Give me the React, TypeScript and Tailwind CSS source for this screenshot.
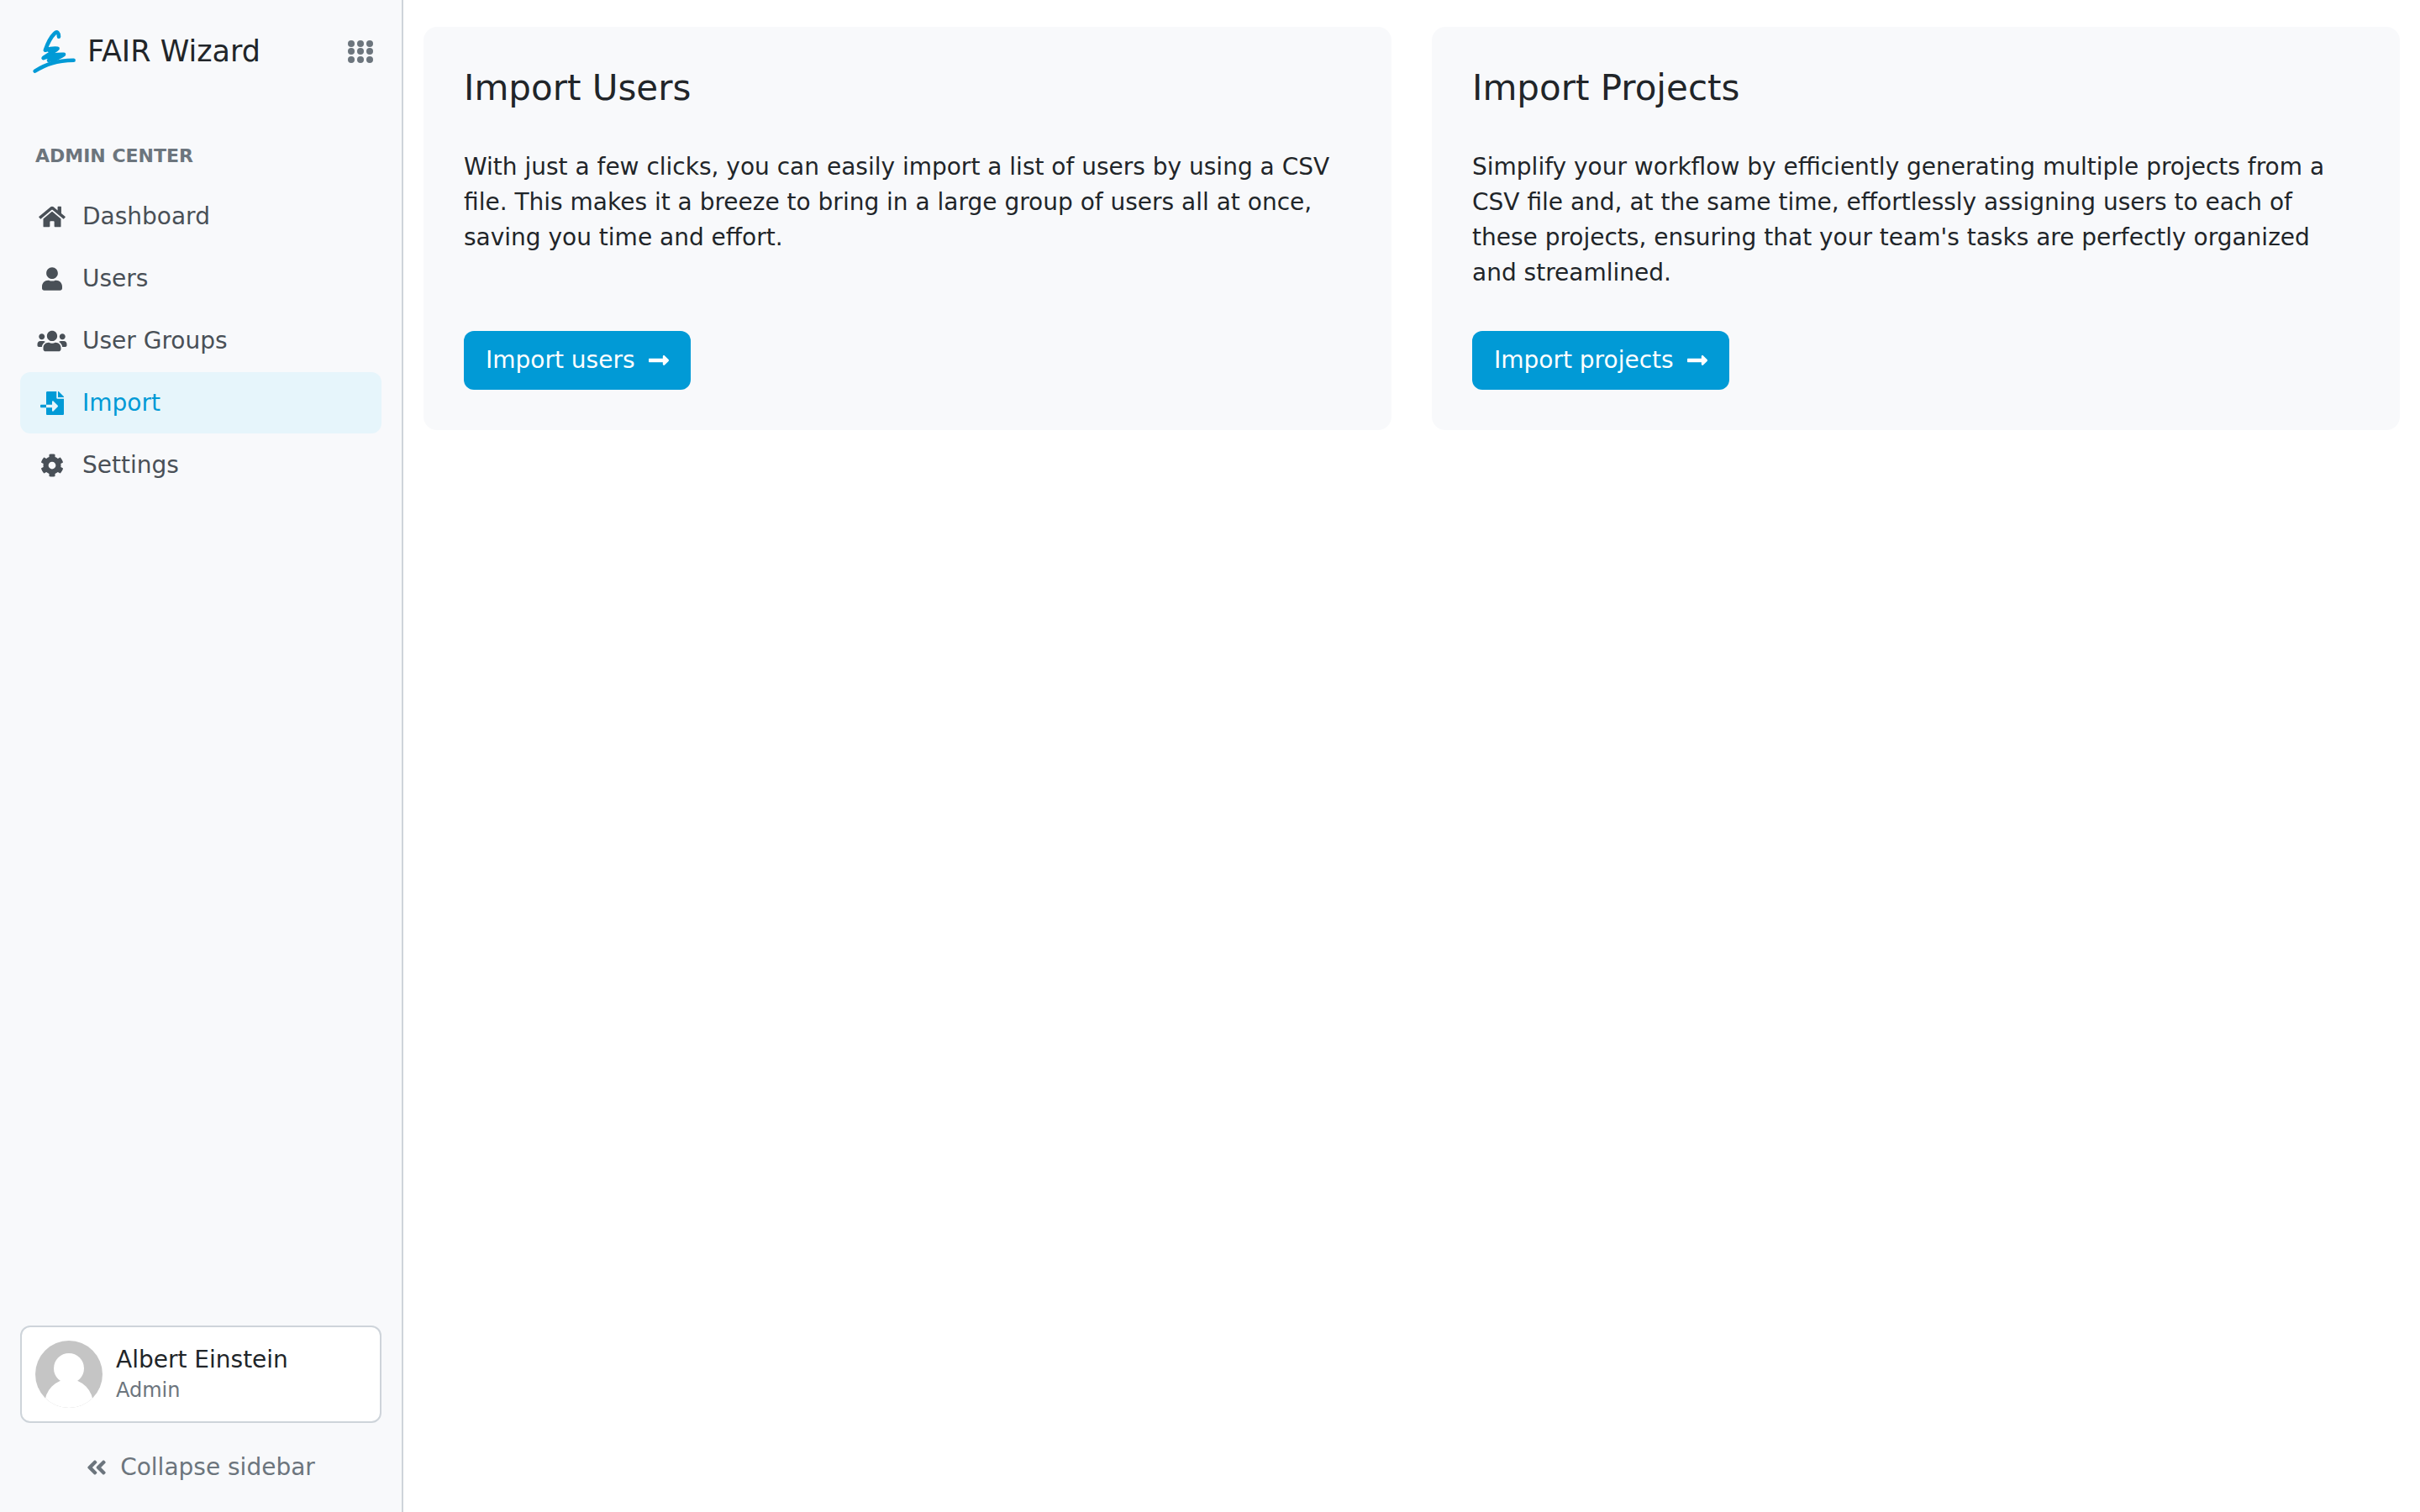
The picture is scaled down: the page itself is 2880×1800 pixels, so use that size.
import type { ReactNode } from "react";
import {
  FaAngleDoubleLeft,
  FaCog,
  FaFileImport,
  FaHome,
  FaLongArrowAltRight,
  FaUser,
  FaUsers,
} from "react-icons/fa";

function Logo() {
  return (
    <svg
      viewBox="0 0 52 52"
      className="h-[52px] w-[52px] overflow-visible text-[#019ad6]"
      fill="none"
      stroke="currentColor"
      strokeLinecap="round"
      strokeLinejoin="round"
      aria-hidden="true"
    >
      <path
        strokeWidth="4.6"
        d="M31 8.6C30.8 4.4 29.2 1.6 25.8 5C21.6 9 17.4 17.4 14.8 24.8C19 23.4 25 22.2 29.6 22.8C27 26.6 17 29.8 12.6 34.2C19 31.4 30 29.6 37 29.8C33 32.8 28 34.4 23 37.6"
      />
      <path strokeWidth="4.6" d="M20 25.4L27.6 23.8M19 33.4L30 30.6M19 36.8L30 33" />
      <path strokeWidth="4.6" d="M2.6 49.6C16 41.4 28 37.2 48.6 36.8" />
    </svg>
  );
}

function AppsIcon() {
  return (
    <svg viewBox="0 0 30 27" className="h-[27px] w-[30px]" fill="currentColor" aria-hidden="true">
      {[4, 13, 23].map((cy) =>
        [4, 15, 26].map((cx) => <circle key={`${cx}-${cy}`} cx={cx} cy={cy} r="4" />),
      )}
    </svg>
  );
}

function Avatar() {
  return (
    <svg viewBox="0 0 80 80" className="h-20 w-20 shrink-0 rounded-full bg-[#c5c5c5]" aria-hidden="true">
      <circle cx="40" cy="33" r="18" fill="#fff" />
      <ellipse cx="40" cy="76" rx="29" ry="30" fill="#fff" />
    </svg>
  );
}

const navItems: { label: string; icon: ReactNode; active?: boolean }[] = [
  { label: "Dashboard", icon: <FaHome className="h-7 w-8" /> },
  { label: "Users", icon: <FaUser className="h-7 w-6" /> },
  { label: "User Groups", icon: <FaUsers className="h-7 w-9" /> },
  { label: "Import", icon: <FaFileImport className="h-7 w-7" />, active: true },
  { label: "Settings", icon: <FaCog className="h-7 w-7" /> },
];

function Sidebar() {
  return (
    <aside className="flex w-[480px] shrink-0 flex-col border-r-2 border-[#ced4da] bg-[#f8f9fb] px-6">
      <header className="flex items-center justify-between pt-[35px] pr-[10px] pl-[15px]">
        <a href="#home" className="flex items-center gap-[13px] text-[35px] leading-[52px]">
          <Logo />
          FAIR Wizard
        </a>
        <button type="button" aria-label="Applications" className="text-[#6c757d]">
          <AppsIcon />
        </button>
      </header>
      <h2 className="mt-[82px] pl-[18px] text-[22px] leading-[34px] font-bold text-[#6c757d]">
        ADMIN CENTER
      </h2>
      <nav className="mt-[18px] flex flex-col gap-px">
        {navItems.map(({ label, icon, active }) => (
          <a
            key={label}
            href={`#${label}`}
            aria-current={active ? "page" : undefined}
            className={
              active
                ? "flex h-[73px] items-center gap-[18px] rounded-xl bg-[#e6f5fb] px-5 text-[#019ad6]"
                : "flex h-[73px] items-center gap-[18px] rounded-xl px-5 text-[#495057]"
            }
          >
            <span className="flex w-9 justify-center">{icon}</span>
            {label}
          </a>
        ))}
      </nav>
      <div className="mt-auto flex flex-col pb-8">
        <button
          type="button"
          className="flex items-center gap-4 rounded-xl border-2 border-[#ced4da] bg-white p-4 text-left"
        >
          <Avatar />
          <span className="flex flex-col">
            <span className="leading-[38px]">Albert Einstein</span>
            <span className="text-[24px] leading-[34px] text-[#6c757d]">Admin</span>
          </span>
        </button>
        <button
          type="button"
          className="mt-8 flex items-center justify-center gap-4 text-[#6c757d]"
        >
          <FaAngleDoubleLeft className="h-7 w-6" />
          Collapse sidebar
        </button>
      </div>
    </aside>
  );
}

function ImportCard({ title, text, action }: { title: string; text: string; action: string }) {
  return (
    <section className="flex flex-1 flex-col items-start rounded-2xl bg-[#f8f9fb] p-12">
      <h1 className="text-[42px] leading-[50px]">{title}</h1>
      <p className="mt-12 mb-12">{text}</p>
      <button
        type="button"
        className="mt-auto flex items-center gap-4 rounded-xl bg-[#019ad6] px-[26px] py-[14px] text-white"
      >
        {action}
        <FaLongArrowAltRight className="h-7 w-6" />
      </button>
    </section>
  );
}

export default function App() {
  return (
    <div className="flex min-h-screen bg-white font-['DejaVu_Sans',sans-serif] text-[28px] leading-[42px] text-[#212529]">
      <Sidebar />
      <main className="flex flex-1 items-start px-6 py-8">
        <div className="flex flex-1 gap-12">
          <ImportCard
            title="Import Users"
            text="With just a few clicks, you can easily import a list of users by using a CSV file. This makes it a breeze to bring in a large group of users all at once, saving you time and effort."
            action="Import users"
          />
          <ImportCard
            title="Import Projects"
            text="Simplify your workflow by efficiently generating multiple projects from a CSV file and, at the same time, effortlessly assigning users to each of these projects, ensuring that your team's tasks are perfectly organized and streamlined."
            action="Import projects"
          />
        </div>
      </main>
    </div>
  );
}
